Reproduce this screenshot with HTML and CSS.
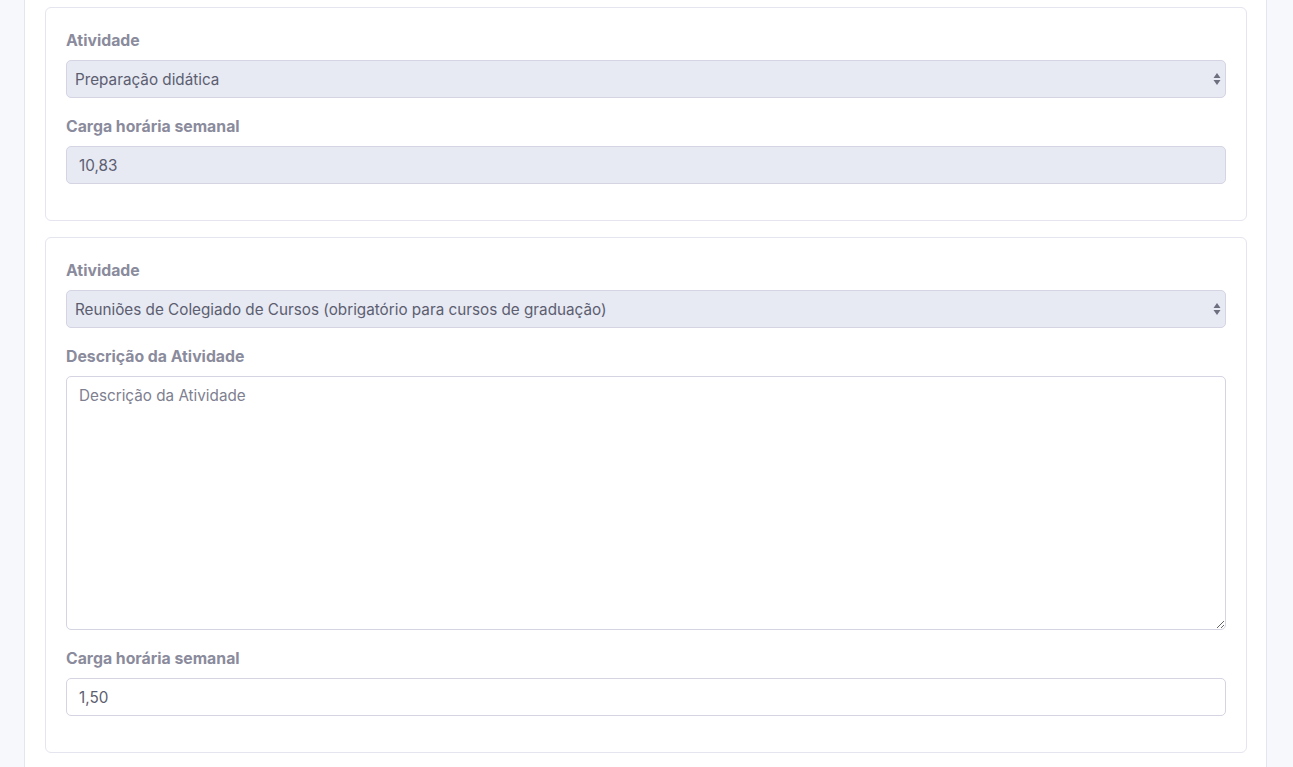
FILE: index.html
```html
<!DOCTYPE html>
<html lang="pt-BR">
<head>
<meta charset="utf-8">
<title>Atividades</title>
<link rel="stylesheet" href="styles.css">
</head>
<body>
<div class="page">
  <div class="container">
    <div class="card">
      <div class="group">
        <label class="label">Atividade</label>
        <div class="select-wrap">
          <select class="field field-select" disabled>
            <option>Preparação didática</option>
          </select>
          <svg class="arrows" width="8" height="14" viewBox="0 0 8 14"><path d="M4 1 L7.5 6 H0.5 Z M4 13 L7.5 8 H0.5 Z" fill="#6e7080"/></svg>
        </div>
      </div>
      <div class="group">
        <label class="label">Carga horária semanal</label>
        <input class="field field-disabled" type="text" value="10,83" disabled>
      </div>
    </div>

    <div class="card">
      <div class="group">
        <label class="label">Atividade</label>
        <div class="select-wrap">
          <select class="field field-select" disabled>
            <option>Reuniões de Colegiado de Cursos (obrigatório para cursos de graduação)</option>
          </select>
          <svg class="arrows" width="8" height="14" viewBox="0 0 8 14"><path d="M4 1 L7.5 6 H0.5 Z M4 13 L7.5 8 H0.5 Z" fill="#6e7080"/></svg>
        </div>
      </div>
      <div class="group">
        <label class="label">Descrição da Atividade</label>
        <textarea class="field field-textarea" placeholder="Descrição da Atividade"></textarea>
      </div>
      <div class="group">
        <label class="label">Carga horária semanal</label>
        <input class="field" type="text" value="1,50">
      </div>
    </div>
  </div>
</div>
</body>
</html>
```

FILE: styles.css
```css
* { box-sizing: border-box; }

html, body {
  margin: 0;
  padding: 0;
  background: #f7f8fc;
  font-family: Inter, "Noto Sans", "Liberation Sans", sans-serif;
}

.page {
  padding: 0 26px 0 24px;
}

.container {
  background: #ffffff;
  border-left: 1px solid #e4e5ef;
  border-right: 1px solid #e4e5ef;
  padding: 7px 19px 20px 20px;
  min-height: 767px;
}

.card {
  border: 1px solid #e4e5ef;
  border-radius: 6px;
  padding: 20px 20px 20px 20px;
  margin-bottom: 16px;
}

.group {
  display: flex;
  flex-direction: column;
  margin-bottom: 16px;
}

.label {
  font-size: 15.8px;
  line-height: 24px;
  padding-top: 1px;
  font-weight: 700;
  color: #8a8b9c;
  margin-bottom: 7px;
}

.field {
  display: block;
  width: 100%;
  height: 38px;
  border: 1px solid #d4d4e3;
  border-radius: 5px;
  background: #ffffff;
  padding: 0 12px;
  font-family: Inter, "Noto Sans", "Liberation Sans", sans-serif;
  font-size: 15.25px;
  color: #5c5e70;
  outline: none;
}

.field-disabled,
.field-select {
  background: #e7e9f3;
  color: #5c5e70;
  opacity: 1;
}

.select-wrap {
  position: relative;
}

.field-select {
  appearance: none;
  -webkit-appearance: none;
  padding: 0 30px 0 8px;
}

.arrows {
  position: absolute;
  right: 5px;
  top: 12px;
  pointer-events: none;
}

.field-textarea {
  height: 254px;
  padding: 9px 12px;
  line-height: 20px;
  resize: vertical;
}

.field-textarea::placeholder {
  color: #7e8090;
  opacity: 1;
}
```
